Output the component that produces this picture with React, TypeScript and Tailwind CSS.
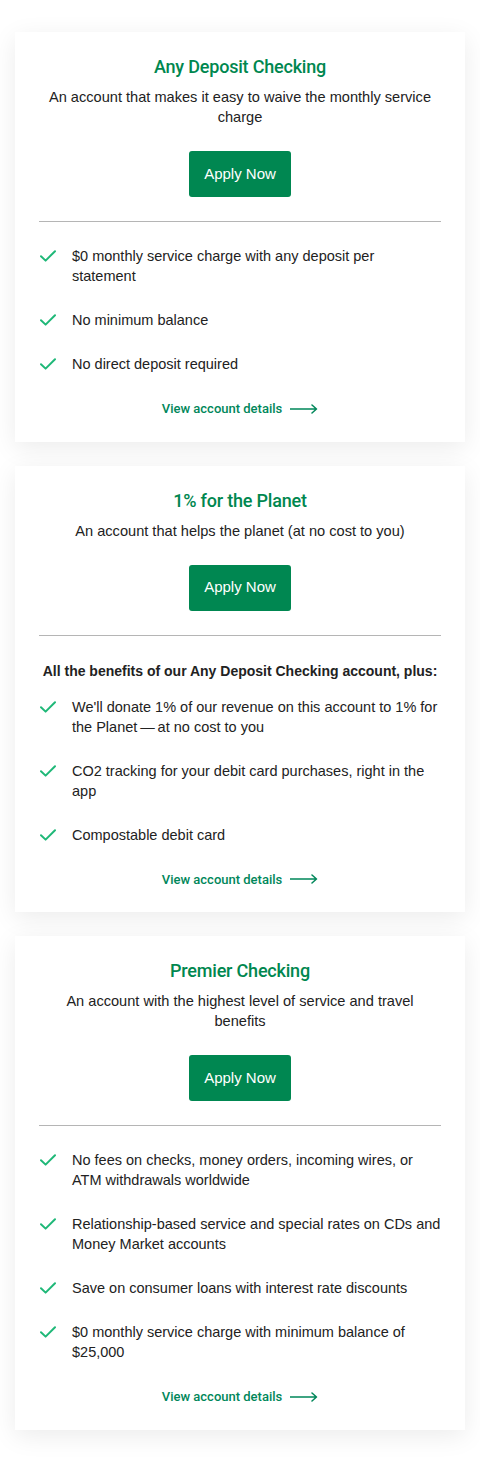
import { ReactNode } from "react";

interface CardProps {
  title: string;
  description: string;
  lead?: string;
  features: string[];
}

const cards: CardProps[] = [
  {
    title: "Any Deposit Checking",
    description: "An account that makes it easy to waive the monthly service charge",
    features: [
      "$0 monthly service charge with any deposit per statement",
      "No minimum balance",
      "No direct deposit required",
    ],
  },
  {
    title: "1% for the Planet",
    description: "An account that helps the planet (at no cost to you)",
    lead: "All the benefits of our Any Deposit Checking account, plus:",
    features: [
      "We'll donate 1% of our revenue on this account to 1% for the Planet\u2009\u2014\u2009at no cost to you",
      "CO2 tracking for your debit card purchases, right in the app",
      "Compostable debit card",
    ],
  },
  {
    title: "Premier Checking",
    description: "An account with the highest level of service and travel benefits",
    features: [
      "No fees on checks, money orders, incoming wires, or ATM withdrawals worldwide",
      "Relationship-based service and special rates on CDs and Money Market accounts",
      "Save on consumer loans with interest rate discounts",
      "$0 monthly service charge with minimum balance of $25,000",
    ],
  },
];

function Check() {
  return (
    <svg width="16" height="12" viewBox="0 0 16 12" fill="none" className="mt-[4px] shrink-0">
      <path d="M1 6.2 L5.6 10.6 L15 1.2" stroke="#1fb878" strokeWidth="2" strokeLinecap="round" strokeLinejoin="round" />
    </svg>
  );
}

function Arrow() {
  return (
    <svg width="28" height="10" viewBox="0 0 28 10" fill="none">
      <path d="M0 5 H26 M22 1 L26.5 5 L22 9" stroke="#00875a" strokeWidth="1.5" strokeLinecap="round" strokeLinejoin="round" />
    </svg>
  );
}

function Card({ title, description, lead, features }: CardProps): ReactNode {
  return (
    <div className="bg-white shadow-[0_6px_24px_rgba(0,0,0,0.08)] px-6 pt-[23px] pb-[23px]">
      {/* Header */}
      <div className="flex flex-col items-center text-center">
        <h2 className="text-[18px] leading-[24px] font-medium text-[#00874f] font-['Roboto',sans-serif] tracking-[-0.2px]">
          {title}
        </h2>
        <p className="mt-[8px] text-[14.6px] leading-[20px] text-[#222]">{description}</p>
        <button className="mt-[24px] h-[46px] w-[102px] rounded-[3px] bg-[#008751] text-white text-[15px]">
          Apply Now
        </button>
      </div>

      <div className="mt-[24px] h-px bg-[#b5b5b5]" />

      {/* Features */}
      <div className="pt-[24px]">
        {lead && (
          <p className="-mx-2 mb-[16px] mt-[1px] text-center text-[14px] leading-[20px] font-bold text-[#222]">
            {lead}
          </p>
        )}
        <ul className="flex flex-col gap-[24px]">
          {features.map((f) => (
            <li key={f} className="flex gap-[16px] pl-[1px]">
              <Check />
              <span className="max-w-[368.5px] text-[14.5px] leading-[20px] text-[#222]">{f}</span>
            </li>
          ))}
        </ul>
        <a className="mt-[25px] flex items-center justify-center gap-[8px] text-[13px] font-medium text-[#00875a] font-['Roboto',sans-serif]">
          View account details
          <Arrow />
        </a>
      </div>
    </div>
  );
}

export default function App() {
  return (
    <div className="min-h-[1462px] bg-white px-[15px] py-[32px] font-['Liberation_Sans',sans-serif]">
      <div className="flex flex-col gap-[24px]">
        {cards.map((c) => (
          <Card key={c.title} {...c} />
        ))}
      </div>
    </div>
  );
}
